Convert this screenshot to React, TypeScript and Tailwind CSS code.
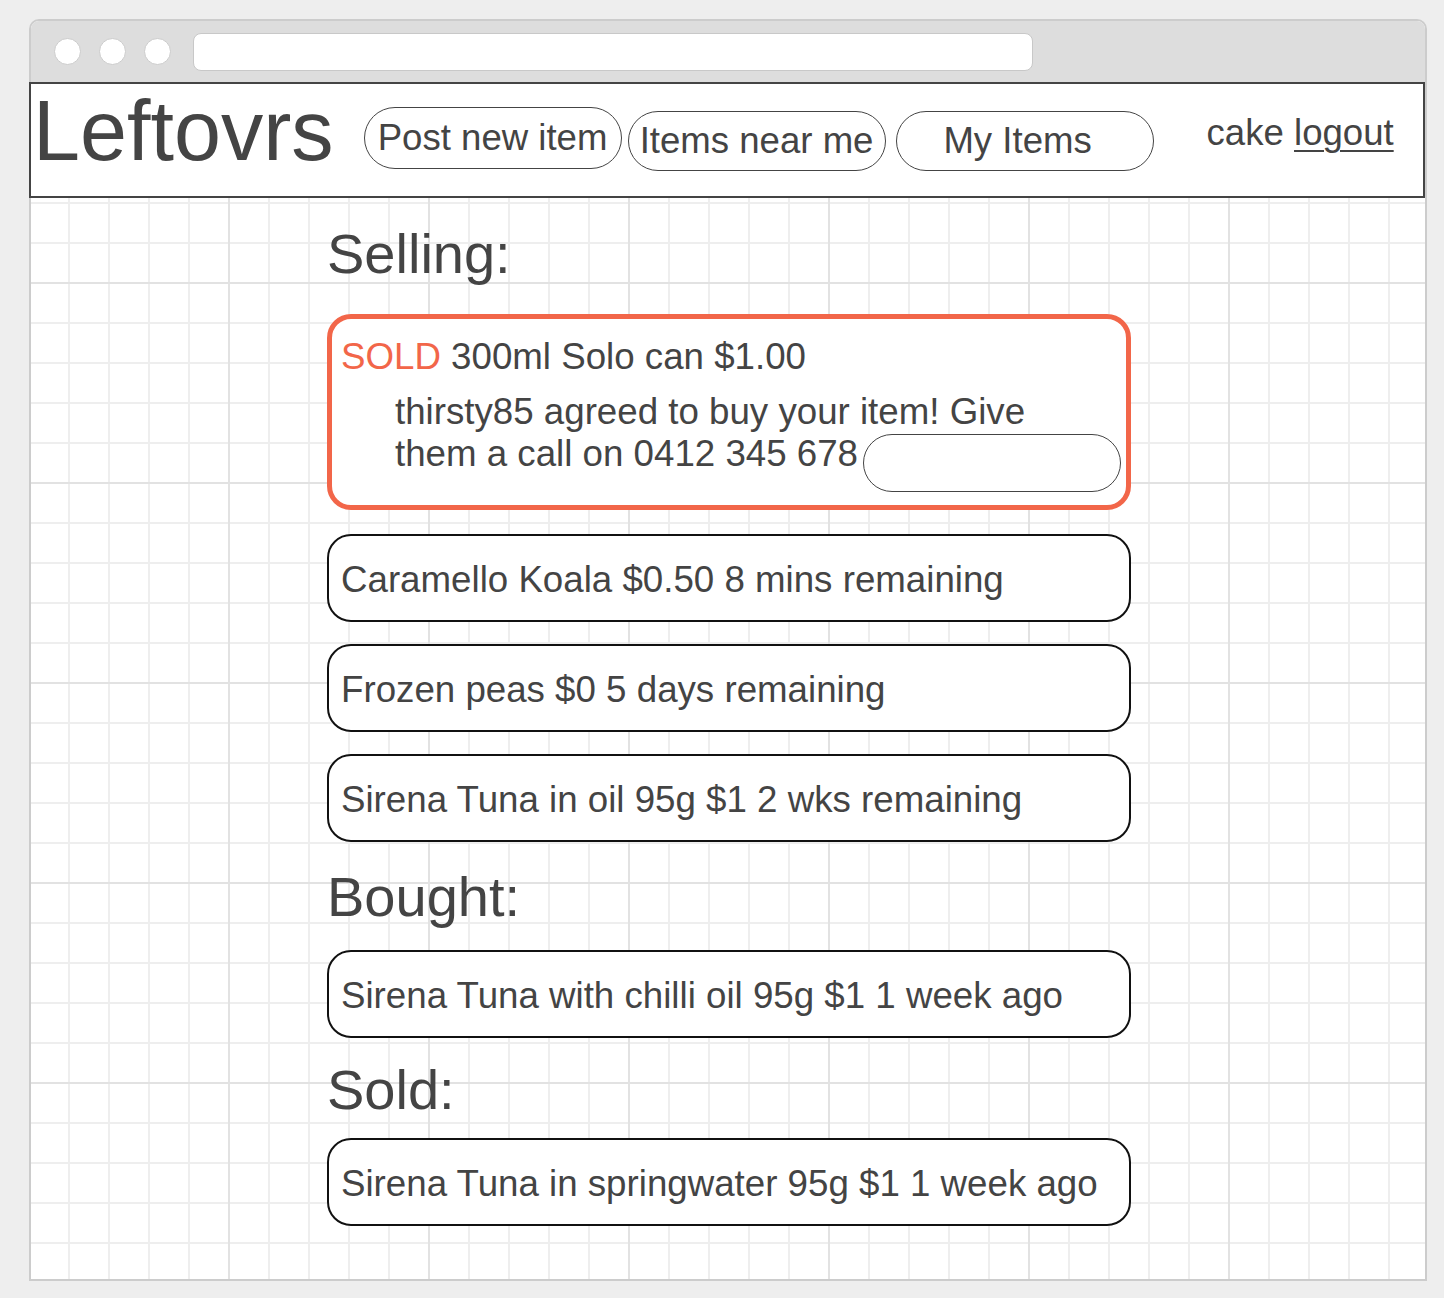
const font = "font-['Liberation_Sans',Arial,sans-serif]";

function Pill({
  children,
  className = "",
}: {
  children?: React.ReactNode;
  className?: string;
}) {
  return (
    <div
      className={`flex w-[258px] items-center justify-center rounded-full border-[1.5px] border-[#444] text-[36.6px] leading-none text-[#444] ${className}`}
    >
      {children}
    </div>
  );
}

function ItemCard({ children }: { children: React.ReactNode }) {
  return (
    <div className="flex h-[88px] items-center rounded-[24px] border-2 border-[#111] bg-white pl-[12px] pt-[3px] text-[36.7px] leading-[42px] text-[#444]">
      {children}
    </div>
  );
}

export default function App() {
  return (
    <div className={`min-h-screen bg-[#eeeeee] pl-[29px] pt-[19px] ${font}`}>
      {/* window frame */}
      <div className="flex h-[1262px] w-[1398px] flex-col rounded-t-[10px] border-2 border-[#cccccc] bg-white">
        {/* title bar */}
        <div className="flex h-[61px] shrink-0 items-center rounded-t-[8px] bg-[#dddddd] pl-[23px]">
          <div className="h-[27px] w-[27px] rounded-full border border-[#cccccc] bg-white" />
          <div className="ml-[18px] h-[27px] w-[27px] rounded-full border border-[#cccccc] bg-white" />
          <div className="ml-[18px] h-[27px] w-[27px] rounded-full border border-[#cccccc] bg-white" />
          <div className="ml-[22px] h-[38px] w-[840px] rounded-[8px] border border-[#c8c8c8] bg-white" />
        </div>

        {/* header */}
        <div className="-ml-[2px] flex h-[116px] w-[1396px] shrink-0 items-start border-2 border-[#444] bg-white pl-[2px]">
          <div className="mt-[5px] text-[84.5px] leading-[84px] text-[#444]">Leftovrs</div>
          <Pill className="ml-[30px] mt-[23px] h-[62px]">Post new item</Pill>
          <Pill className="ml-[6px] mt-[27px] h-[60px]">Items near me</Pill>
          <Pill className="ml-[10px] mt-[27px] h-[60px] pr-[14px]">My Items</Pill>
          <div className="ml-[53px] mt-[28px] text-[36.6px] leading-[42px] text-[#444]">
            cake <span className="underline decoration-2 underline-offset-[5px]">logout</span>
          </div>
        </div>

        {/* canvas */}
        <div className="flex-1 bg-[linear-gradient(to_right,#e2e2e2_2px,transparent_2px),linear-gradient(to_bottom,#e2e2e2_2px,transparent_2px),linear-gradient(to_right,#eeeeee_2px,transparent_2px),linear-gradient(to_bottom,#eeeeee_2px,transparent_2px)] bg-[size:200px_200px,200px_200px,40px_40px,40px_40px] bg-[position:-3px_84px,-3px_84px,-3px_4px,-3px_4px]">
          <div className="ml-[296px] flex w-[804px] flex-col">
            <h2 className="mt-[28px] text-[56px] leading-[56px] text-[#444]">Selling:</h2>

            <div className="mt-[32px] rounded-[24px] border-[5px] border-[#f26649] bg-white pb-[13px] pl-[9px] pt-[17px] text-[36.7px] leading-[42px] text-[#444]">
              <div>
                <span className="text-[#f26649]">SOLD</span> 300ml Solo can $1.00
              </div>
              <div className="mt-[13px] pl-[54px]">
                thirsty85 agreed to buy your item! Give
                <br />
                them a call on 0412 345 678
                <span className="ml-[5px] mt-[1px] inline-block h-[58px] w-[258px] rounded-full border-[1.5px] border-[#444] align-top" />
              </div>
            </div>

            <div className="mt-[24px] flex flex-col gap-[22px]">
              <ItemCard>Caramello Koala $0.50 8 mins remaining</ItemCard>
              <ItemCard>Frozen peas $0 5 days remaining</ItemCard>
              <ItemCard>Sirena Tuna in oil 95g $1 2 wks remaining</ItemCard>
            </div>

            <h2 className="mt-[27px] text-[56px] leading-[56px] text-[#444]">Bought:</h2>
            <div className="mt-[25px]">
              <ItemCard>Sirena Tuna with chilli oil 95g $1 1 week ago</ItemCard>
            </div>

            <h2 className="mt-[24px] text-[56px] leading-[56px] text-[#444]">Sold:</h2>
            <div className="mt-[20px]">
              <ItemCard>Sirena Tuna in springwater 95g $1 1 week ago</ItemCard>
            </div>
          </div>
        </div>
      </div>
    </div>
  );
}
